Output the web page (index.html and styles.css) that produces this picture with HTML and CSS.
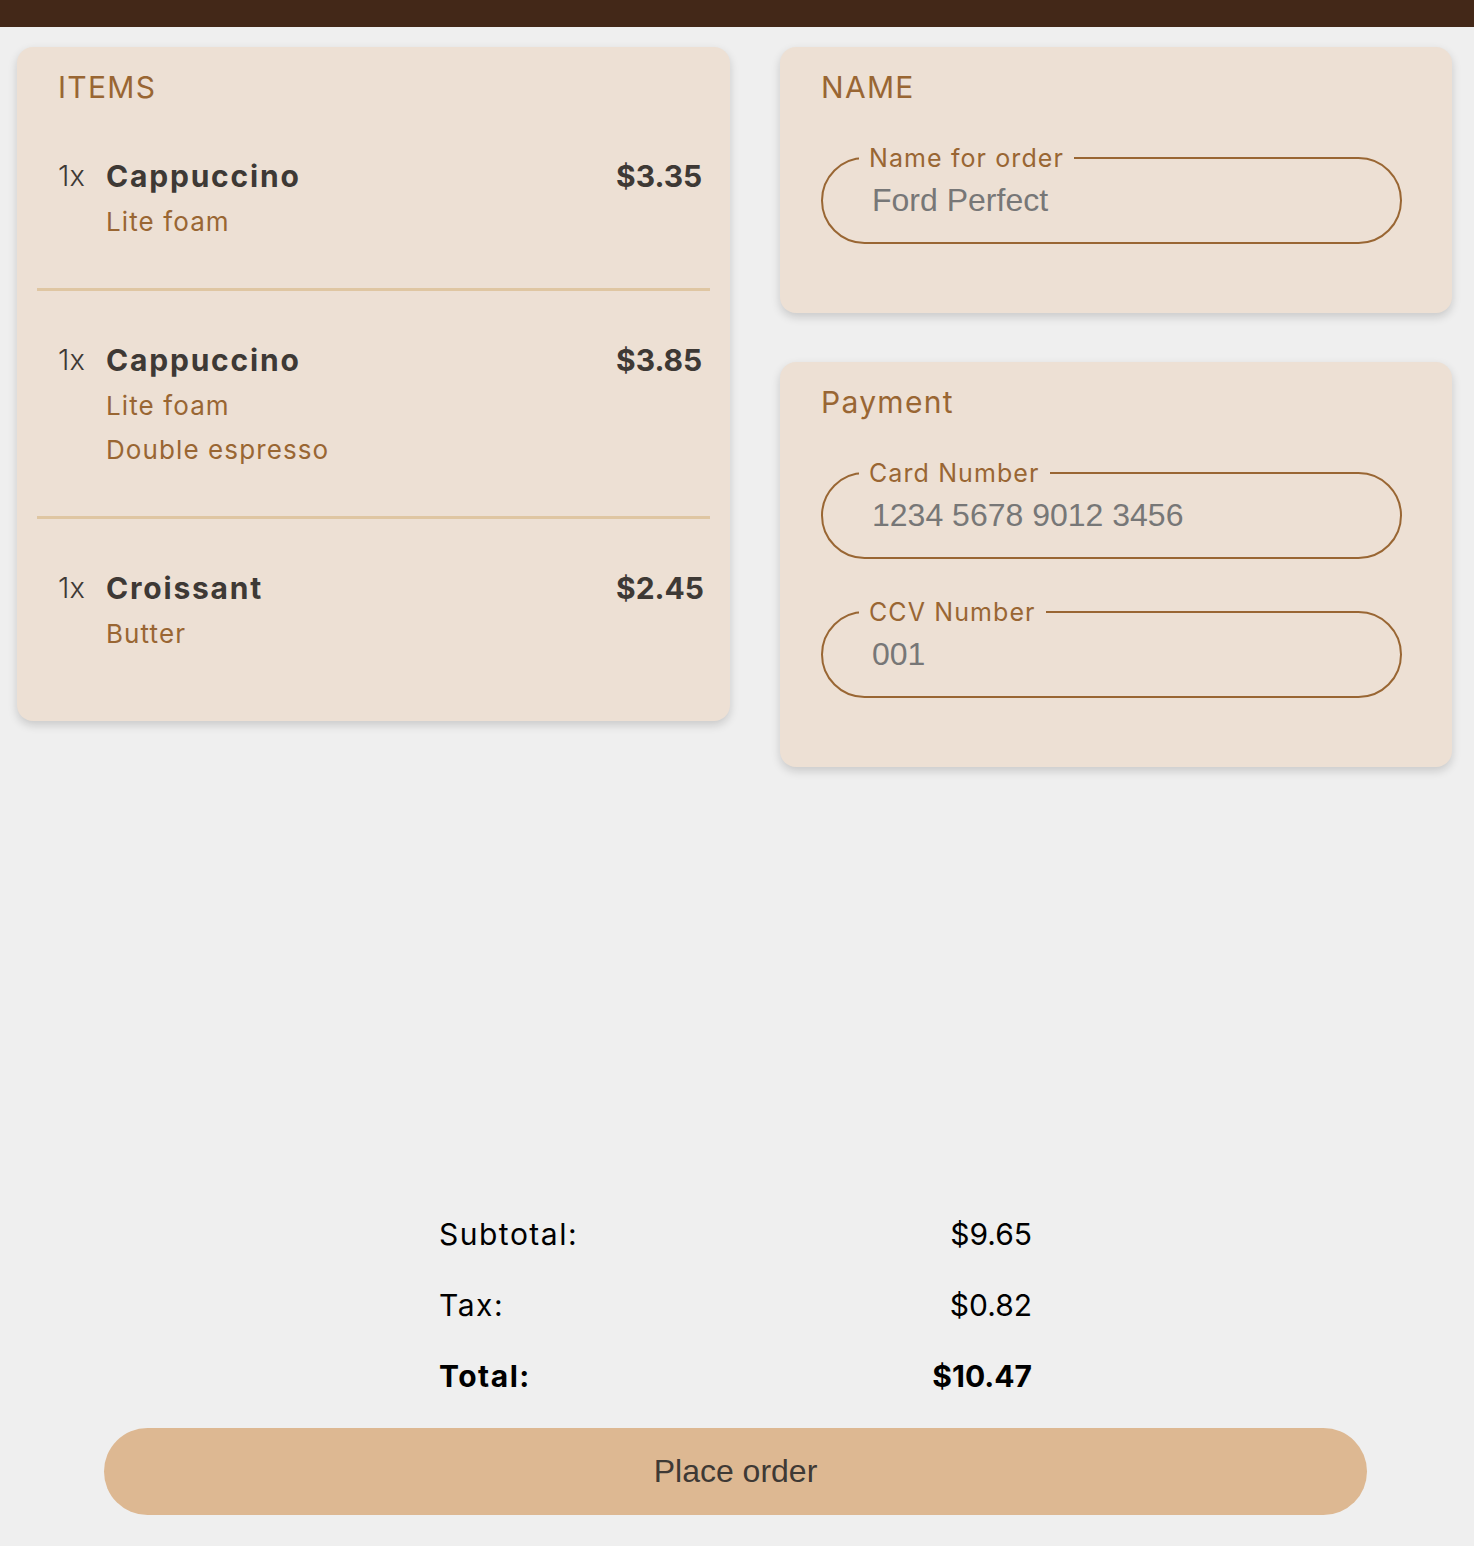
FILE: index.html
```html
<!DOCTYPE html>
<html lang="en">
<head>
<meta charset="utf-8">
<title>Checkout</title>
<link rel="stylesheet" href="styles.css">
</head>
<body>
<header class="topbar"></header>
<div class="page">
  <main class="columns">
    <section class="card items-card">
      <h2 class="card-title">ITEMS</h2>
      <ul class="item-list">
        <li class="item">
          <span class="qty">1x</span>
          <span class="name">Cappuccino</span>
          <span class="price">$3.35</span>
          <span class="mod">Lite foam</span>
        </li>
        <li class="item">
          <span class="qty">1x</span>
          <span class="name">Cappuccino</span>
          <span class="price">$3.85</span>
          <span class="mod">Lite foam</span>
          <span class="mod">Double espresso</span>
        </li>
        <li class="item">
          <span class="qty">1x</span>
          <span class="name">Croissant</span>
          <span class="price">$2.45</span>
          <span class="mod">Butter</span>
        </li>
      </ul>
    </section>
    <div class="side">
      <section class="card form-card">
        <h2 class="card-title">NAME</h2>
        <fieldset class="field">
          <legend>Name for order</legend>
          <input type="text" value="Ford Perfect">
        </fieldset>
      </section>
      <section class="card form-card">
        <h2 class="card-title">Payment</h2>
        <fieldset class="field">
          <legend>Card Number</legend>
          <input type="text" value="1234 5678 9012 3456">
        </fieldset>
        <fieldset class="field">
          <legend>CCV Number</legend>
          <input type="text" value="001">
        </fieldset>
      </section>
    </div>
  </main>
  <section class="summary">
    <div class="row"><span class="label">Subtotal:</span><span>$9.65</span></div>
    <div class="row"><span class="label">Tax:</span><span>$0.82</span></div>
    <div class="row total"><span class="label">Total:</span><span>$10.47</span></div>
  </section>
  <button class="order-btn" type="button">Place order</button>
</div>
</body>
</html>
```
FILE: styles.css
```css
* { box-sizing: border-box; }
html, body { margin: 0; padding: 0; }
body {
  background: #efefef;
  font-family: "Inter", "Noto Sans", sans-serif;
  color: #3e3935;
}
.topbar {
  height: 27px;
  background: #432818;
}
.page {
  min-height: calc(100vh - 27px);
  display: flex;
  flex-direction: column;
  align-items: center;
  padding: 20px 0 31px;
}
.columns {
  display: grid;
  grid-template-columns: 713px 672px;
  gap: 50px;
  align-items: start;
  align-self: stretch;
  padding-left: 17px;
}
.card {
  background: #ede0d4;
  border-radius: 16px;
  box-shadow: 0 4px 10px rgba(0,0,0,0.16);
}
.card-title {
  margin: 0;
  font-size: 30px;
  line-height: 40px;
  font-weight: 400;
  letter-spacing: 1.3px;
  color: #996633;
}
.items-card {
  padding: 20px 0 21px;
}
.items-card .card-title { padding-left: 41px; }
.item-list {
  list-style: none;
  margin: 0;
  padding: 0;
}
.item {
  margin: 0 20px;
  padding: 45px 0 44px 21px;
  border-bottom: 3px solid #dfc6a2;
  display: grid;
  grid-template-columns: 48px 1fr 94px;
}
.item:last-child { border-bottom: none; }
.qty {
  font-size: 29px;
  line-height: 48px;
  font-weight: 300;
}
.name {
  font-size: 30px;
  line-height: 48px;
  font-weight: 700;
  letter-spacing: 1.8px;
}
.price {
  font-size: 30px;
  line-height: 48px;
  font-weight: 700;
}
.mod {
  grid-column: 2 / 4;
  font-size: 26px;
  line-height: 44px;
  letter-spacing: 1.1px;
  color: #996633;
}
.side {
  display: flex;
  flex-direction: column;
  gap: 49px;
}
.form-card {
  padding: 20px 50px 31px 41px;
}
.form-card .card-title { margin-bottom: 36px; }
.field {
  margin: 0 0 38px;
  border: 2px solid #996633;
  border-radius: 44px;
  padding: 0 36px 15px;
  min-width: 0;
}
.field legend {
  padding: 0 10px;
  font-size: 25px;
  line-height: 30px;
  letter-spacing: 1.1px;
  color: #996633;
}
.field input {
  display: block;
  width: 100%;
  border: none;
  background: transparent;
  outline: none;
  padding: 9px 0 9px 13px;
  font-family: "Liberation Sans", Arial, sans-serif;
  font-size: 32px;
  line-height: 36px;
  color: #777;
}
.summary {
  margin-top: auto;
  width: 593px;
  margin-left: -3px;
  color: #000;
}
.row {
  display: flex;
  justify-content: space-between;
  font-size: 30px;
  line-height: 71px;
}
.row .label { letter-spacing: 1.5px; }
.row.total { font-weight: 700; }
.order-btn {
  margin-top: 16px;
  width: 1263px;
  margin-left: -3px;
  height: 87px;
  border: none;
  border-radius: 44px;
  background: #ddb892;
  font-family: "Liberation Sans", Arial, sans-serif;
  font-size: 32px;
  color: #3e3935;
}
```
